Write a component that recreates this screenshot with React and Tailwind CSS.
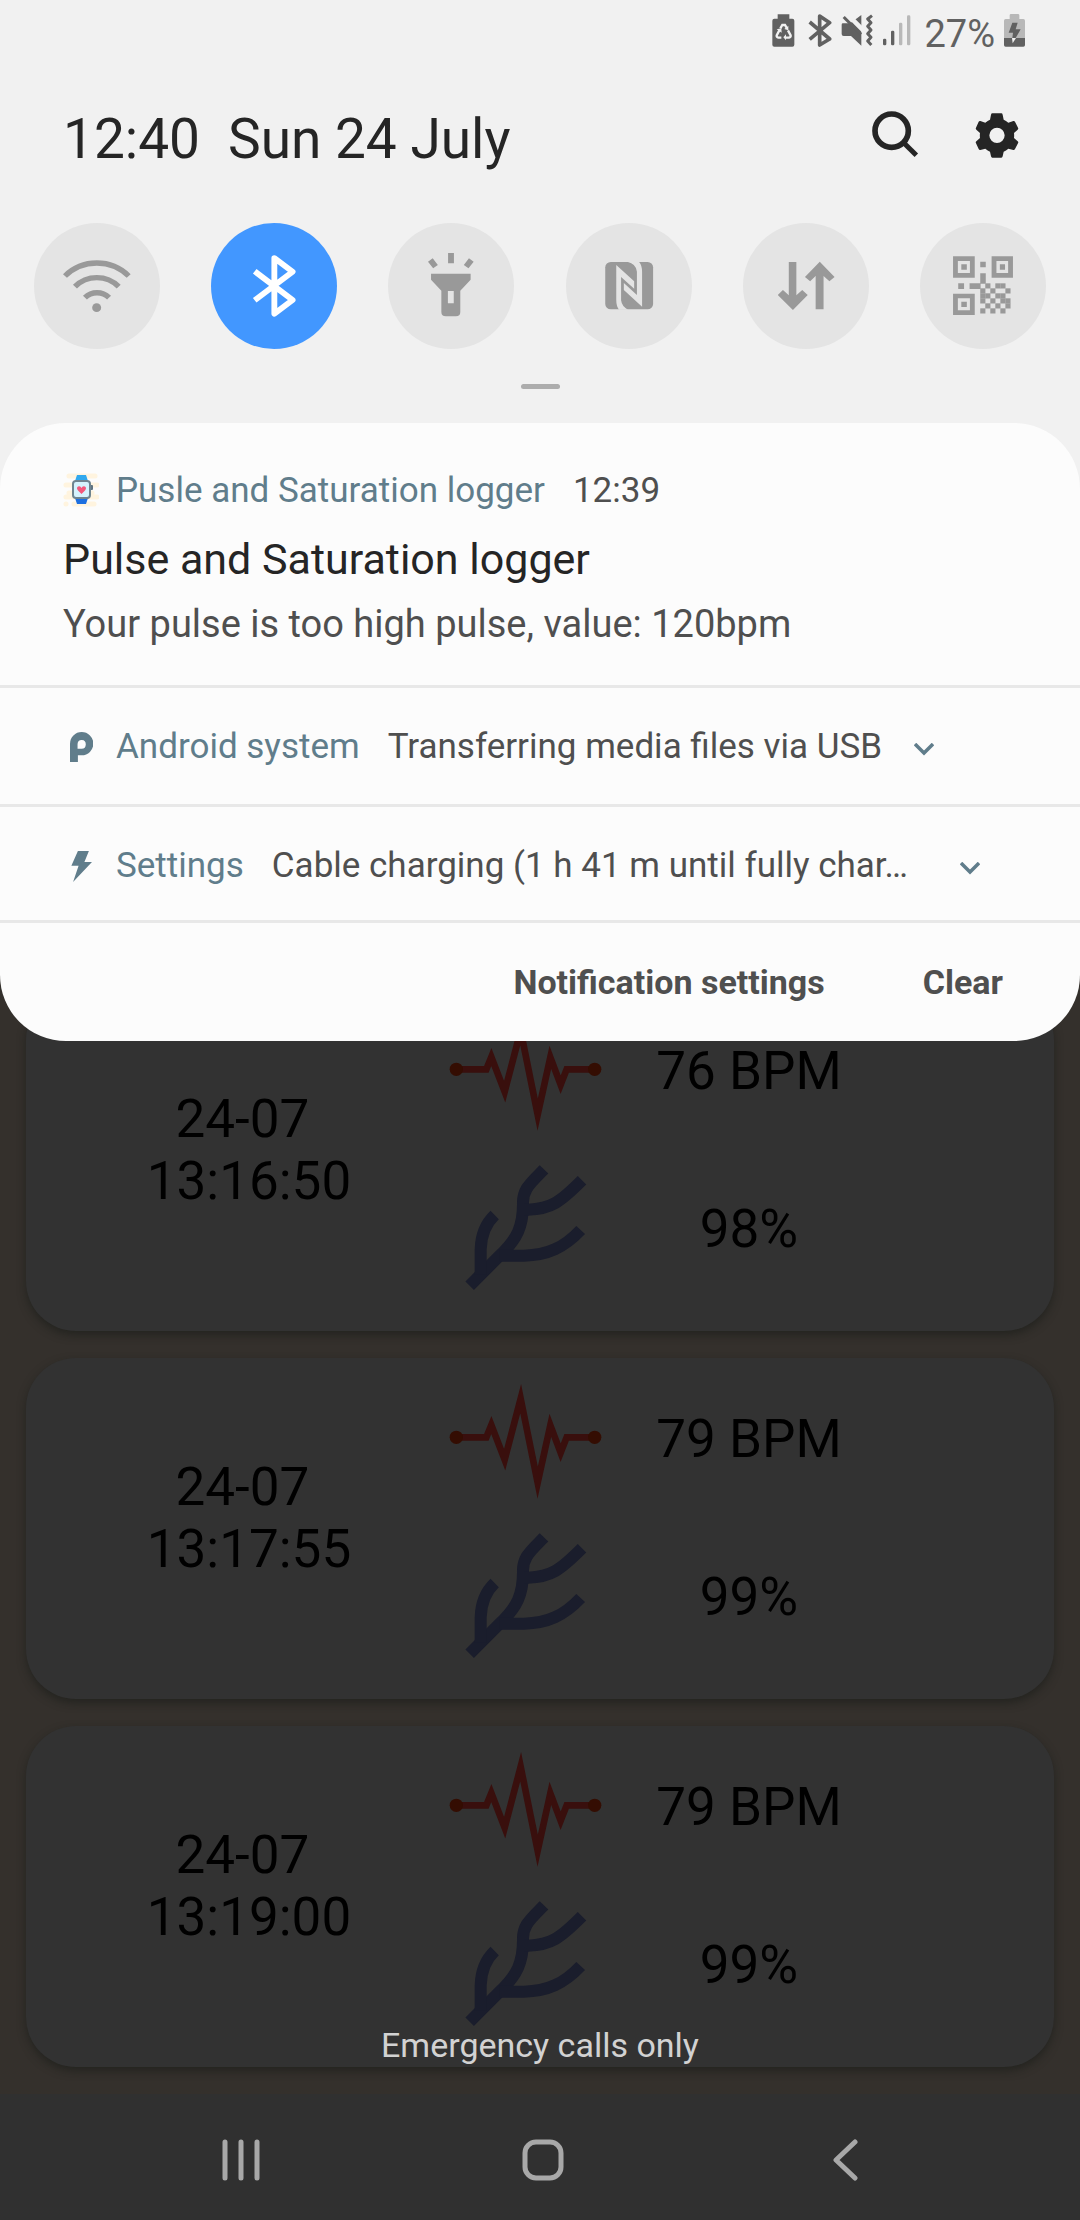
function StatusIcons() {
  return (
    <>
      <svg viewBox="63 45 69 99" className="block h-[33px] w-[23px]" aria-label="Battery saver">
        <path fill="#616161" d="M80 46H115V59H124Q130 59 130 65V137Q130 143 124 143H70Q64 143 64 137V65Q64 59 70 59H80Z" />
        <g fill="none" stroke="#f1f1f1" strokeWidth="7">
          <path d="M88 88L94 78H102L108 88" />
          <path d="M85 94L77 109Q76 115 82 116H91" />
          <path d="M111 94L119 109Q120 115 114 116H104" />
        </g>
        <path fill="#f1f1f1" d="M112 81V94L100 90ZM77 91L91 88L92 101ZM105 106V124L97 115Z" />
      </svg>
      <svg viewBox="173 45 72 99" className="ml-[13px] block h-[33px] w-[24px]" fill="none" stroke="#616161" strokeWidth="11" strokeLinejoin="round" aria-label="Bluetooth on">
        <path d="M178 69L238 120L208 138V51L238 71L178 121" />
      </svg>
      <svg viewBox="272 45 99 99" className="ml-[9px] block h-[33px] w-[33px]" aria-label="Vibrate">
        <path fill="#616161" d="M278 73H300L333 48V140L302 111H280Q274 111 274 105V77Q274 73 278 73Z" />
        <path fill="none" stroke="#f1f1f1" strokeWidth="14" d="M286 41L345 100" />
        <path fill="none" stroke="#616161" strokeWidth="9" d="M280 54L332 106" />
        <path fill="none" stroke="#616161" strokeWidth="9" strokeLinejoin="round" d="M365 50L352 60L362 71L352 82L362 93L352 104L362 115L352 126L363 138" />
      </svg>
      <svg viewBox="396 45 84 99" className="ml-[9px] block h-[33px] w-[28px]" aria-label="Signal">
        <g fill="#616161">
          <rect x="396" y="119" width="10" height="20" rx="4" />
          <rect x="420" y="95" width="10" height="44" rx="4" />
        </g>
        <g fill="#b8b8b8">
          <rect x="444" y="71" width="10" height="68" rx="4" />
          <rect x="468" y="49" width="10" height="90" rx="4" />
        </g>
      </svg>
      <span className="ml-[13px] text-[38px] leading-[44px] text-[#616161]">27%</span>
      <svg viewBox="762 45 63 99" className="ml-[9px] block h-[33px] w-[21px]" aria-label="Charging">
        <path fill="#b8b8b8" d="M779 49Q779 45 783 45H804Q808 45 808 49V60H820Q825 60 825 65V117H762V65Q762 60 767 60H779Z" />
        <path fill="#616161" d="M762 117H825V138Q825 143 820 143H767Q762 143 762 138Z" />
        <path fill="#616161" d="M787 71H803L797 91H812L797 117H787L789 101H776Z" />
        <path fill="#f1f1f1" d="M786 117H798L788 133Z" />
      </svg>
    </>
  );
}

function SearchIcon() {
  return (
    <svg viewBox="363 339 141 141" className="block size-[47px]" fill="none" stroke="#252525" aria-hidden="true">
      <circle cx="422" cy="398" r="50" strokeWidth="17" />
      <path strokeWidth="15" d="M458 434L496 472" />
    </svg>
  );
}

function GearIcon() {
  return (
    <svg viewBox="674 342 132 135" className="block h-[45px] w-[44px]" fill="#252525" fillRule="evenodd" aria-hidden="true">
      <path d="M726 343H753Q756 343 757 347L760 362Q767 365 774 371L789 366Q792 365 794 368L803 386Q805 389 802 392L791 402Q792 409 791 417L802 427Q805 430 803 433L794 450Q792 454 789 453L774 449Q767 455 760 458L757 472Q756 476 753 476H726Q723 476 722 472L719 458Q712 455 705 449L690 453Q687 454 685 450L677 433Q675 430 678 427L689 417Q688 409 689 402L678 392Q675 389 677 386L685 368Q687 365 690 366L705 371Q712 365 719 362L722 347Q723 343 726 343ZM740 386A23 23 0 1 0 740 432A23 23 0 1 0 740 386Z" />
    </svg>
  );
}

function WifiIcon() {
  return (
    <svg viewBox="99 428 366 378" preserveAspectRatio="none" className="block size-full" aria-hidden="true">
      <g fill="none" stroke="currentColor" strokeWidth="16">
        <path d="M189 587A129 129 0 0 1 374 587" />
        <path d="M218 619A88 88 0 0 1 345 619" />
        <path d="M247 652A49 49 0 0 1 317 652" />
      </g>
      <circle cx="281" cy="682" r="13" fill="currentColor" />
    </svg>
  );
}

function BluetoothIcon() {
  return (
    <svg viewBox="613 428 366 378" preserveAspectRatio="none" className="block size-full" fill="none" stroke="currentColor" strokeWidth="17" strokeLinejoin="round" aria-hidden="true">
      <path d="M740 573L850 659L797 700V533L850 574L740 660" />
    </svg>
  );
}

function TorchIcon() {
  return (
    <svg viewBox="1127 428 366 378" preserveAspectRatio="none" className="block size-full" aria-hidden="true">
      <path fill="none" stroke="currentColor" strokeWidth="17" d="M1310 518V549M1250 539L1265 559M1369 539L1354 559" />
      <path fill="currentColor" fillRule="evenodd" d="M1252 580H1367V598L1337 631V695Q1337 708 1324 708H1295Q1282 708 1282 695V631L1252 598ZM1301 632V669H1318V632Z" />
    </svg>
  );
}

function NfcIcon() {
  return (
    <svg viewBox="72 68 366 378" preserveAspectRatio="none" className="block size-full" aria-hidden="true">
      <rect x="186" y="185" width="139" height="142" rx="16" fill="currentColor" />
      <path fill="#e4e4e4" d="M218 194L270 243V265L232 230V300Q234 318 252 328H226Q218 318 218 300ZM293 319L240 269V248L278 284V214Q276 190 250 184H284Q293 195 293 214Z" />
    </svg>
  );
}

function DataIcon() {
  return (
    <svg viewBox="586 68 366 378" preserveAspectRatio="none" className="block size-full" fill="currentColor" aria-hidden="true">
      <path d="M719 185H741V285L758 269L774 284L731 329L687 284L702 269L719 285ZM809 184L852 230L837 243L820 227V327H797V227L781 243L766 230Z" />
    </svg>
  );
}

function QrIcon() {
  const rows = [".1.11.", "1.1..1", "11.11.", "1.1.11", ".1.1.1", "1.1.1."];
  return (
    <svg viewBox="1103 68 366 378" preserveAspectRatio="none" className="block size-full" fill="currentColor" aria-hidden="true">
      <path fillRule="evenodd" d="M1199 168H1262V232H1199ZM1213 182V218H1248V182ZM1311 168H1373V232H1311ZM1325 182V218H1359V182ZM1199 280H1262V344H1199ZM1213 294V330H1248V294Z" />
      <path d="M1223 192H1239V208H1223ZM1335 192H1350V208H1335ZM1223 304H1239V320H1223ZM1278 184H1294V201H1278ZM1214 249H1231V266H1214ZM1278 219H1294V250H1278ZM1247 249H1279V266H1247Z" />
      {rows.flatMap((row, r) =>
        [...row].map((cell, c) =>
          cell === "1" ? <rect key={`${r}-${c}`} x={1278 + c * 14.6} y={249 + r * 15} width="15" height="15.5" /> : null
        )
      )}
    </svg>
  );
}

function WatchIcon() {
  return (
    <svg viewBox="0 0 36 36" className="block size-[36px]" aria-hidden="true">
      <path stroke="#fff4df" strokeWidth="5" strokeLinecap="round" d="M6 3H32M3 12H34M6 20H29M3 24H34M11 31H31M3 31H3" />
      <path fill="#31a8ee" d="M14 2H23L25 8H12Z" />
      <path fill="#1d6fe0" d="M12 25H25L23 31H14Z" />
      <rect x="27" y="12" width="3" height="5" rx="1" fill="#5f7380" />
      <rect x="9" y="7" width="19" height="19" rx="4" fill="#6f8490" />
      <rect x="11" y="9" width="15" height="15" rx="2" fill="#d5f2fd" />
      <path fill="#f3587c" d="M18.5 21L15 17.5Q13 15 15 13.5Q17.5 12.5 18.5 15Q19.5 12.5 22 13.5Q24 15 22 17.5Z" />
    </svg>
  );
}

function AndroidIcon() {
  return (
    <svg viewBox="203 182 67 90" preserveAspectRatio="none" className="ml-[7px] block h-[30px] w-[23px]" fill="#607d8b" aria-hidden="true">
      <path fillRule="evenodd" d="M203 272V217A34 35 0 1 1 237 252H226V272ZM225 232V218A12 13 0 1 1 237 232Z" />
    </svg>
  );
}

function BoltIcon() {
  return (
    <svg viewBox="203 534 67 92" preserveAspectRatio="none" className="ml-[7px] block h-[31px] w-[23px]" fill="#607d8b" aria-hidden="true">
      <path d="M226 534H258L245 567H267L212 626L228 578H207Z" />
    </svg>
  );
}

function Chevron() {
  return (
    <svg viewBox="0 0 20 13" className="block h-[13px] w-[20px]" fill="none" stroke="#607d8b" strokeWidth="3.5" aria-hidden="true">
      <path d="M1 1L10 10L19 1" />
    </svg>
  );
}

function PulseIcon() {
  return (
    <svg viewBox="85 65 462 354" className="block h-[118px] w-[154px]" aria-label="Pulse">
      <path fill="none" stroke="#390f0d" strokeWidth="20" strokeMiterlimit="10" d="M107 231H197L212 194L252 298L300 115L351 367L389 195L420 277L438 231H522" />
      <circle cx="107" cy="231" r="20" fill="#340d02" />
      <circle cx="522" cy="231" r="20" fill="#340d02" />
    </svg>
  );
}

function VesselIcon() {
  return (
    <svg viewBox="130 519 369 378" className="block h-[126px] w-[123px]" fill="none" stroke="#1a1d2c" strokeWidth="36" aria-label="Saturation">
      <path d="M147 884L238 793C290 744 307 705 307 640C305 596 326 580 370 535" />
      <path d="M180 850V775Q182 710 222 672" />
      <path d="M310 656H322C392 654 420 632 484 568" />
      <path d="M236 794H310C380 793 430 770 480 717" />
    </svg>
  );
}

const toggles = [
  { label: "Wi-Fi", Icon: WifiIcon, on: false },
  { label: "Bluetooth", Icon: BluetoothIcon, on: true },
  { label: "Torch", Icon: TorchIcon, on: false },
  { label: "NFC", Icon: NfcIcon, on: false },
  { label: "Mobile data", Icon: DataIcon, on: false },
  { label: "QR scanner", Icon: QrIcon, on: false },
];

const readings = [
  { date: "24-07 ", time: "13:16:50", pulse: "76 BPM", saturation: "98%" },
  { date: "24-07 ", time: "13:17:55", pulse: "79 BPM", saturation: "99%" },
  { date: "24-07 ", time: "13:19:00", pulse: "79 BPM", saturation: "99%" },
];

function Reading({ date, time, pulse, saturation }) {
  return (
    <li className="flex rounded-[50px] bg-[#323232] pt-[24px] pb-[41px] text-[53px] leading-[62px] text-black shadow-[0_4px_8px_rgba(20,24,20,0.5)]">
      <p className="w-[446px] shrink-0 pt-[74px] text-center whitespace-pre">
        {date}
        {"\n"}
        {time}
      </p>
      <div className="grid w-[400px] shrink-0 grid-cols-[154px_1fr] items-start justify-items-center">
        <div className="-ml-[46px] h-[150px]">
          <PulseIcon />
        </div>
        <p className="pt-[26px] whitespace-nowrap">{pulse}</p>
        <div className="-ml-[48px]">
          <VesselIcon />
        </div>
        <p className="pt-[34px]">{saturation}</p>
      </div>
    </li>
  );
}

function SystemRow({ icon, app, text, wide }) {
  return (
    <li className="flex items-center border-t-[3px] border-[#e8e8e8] pt-[38px] pr-[100px] pb-[36px] pl-[63px] text-[35px] leading-[42px] last:pb-[33px]">
      <div className="w-[53px] shrink-0">{icon}</div>
      <span className="shrink-0 text-[#607d8b]">{app}</span>
      <span className={wide ? "ml-[28px] min-w-0 flex-1 truncate text-[#4f4f4f]" : "ml-[28px] truncate text-[#4f4f4f]"}>{text}</span>
      <button type="button" aria-label={`Expand ${app}`} className="ml-[32px] shrink-0 pt-1">
        <Chevron />
      </button>
    </li>
  );
}

export default function App() {
  return (
    <div className="relative flex min-h-screen flex-col bg-[#34302c] font-['Roboto',sans-serif]">
      <main className="relative px-[26px] pt-[990px] pb-[27px]">
        <ul className="flex flex-col gap-[27px]">
          {readings.map((r) => (
            <Reading key={r.time} {...r} />
          ))}
        </ul>
        <p className="absolute inset-x-0 bottom-[28px] text-center text-[34px] leading-[42px] text-[#d2d2d2]">Emergency calls only</p>
      </main>

      <nav className="mt-auto flex h-[126px] items-center justify-around bg-[#303030] pt-[6px] pr-[84px] pl-[90px]">
        <button type="button" aria-label="Recent apps" className="p-2">
          <svg viewBox="0 0 42 42" className="block size-[42px]" stroke="#a8a8a8" strokeWidth="5" strokeLinecap="round">
            <path d="M5 3V39M21 3V39M37 3V39" />
          </svg>
        </button>
        <button type="button" aria-label="Home" className="p-2">
          <svg viewBox="0 0 42 42" className="block size-[42px]" fill="none" stroke="#a8a8a8" strokeWidth="5">
            <rect x="3" y="3" width="36" height="36" rx="11" />
          </svg>
        </button>
        <button type="button" aria-label="Back" className="p-2">
          <svg viewBox="0 0 42 42" className="block size-[42px]" fill="none" stroke="#a8a8a8" strokeWidth="5" strokeLinecap="round" strokeLinejoin="round">
            <path d="M31 3L12 21L31 39" />
          </svg>
        </button>
      </nav>

      <section className="absolute inset-x-0 top-0" aria-label="Notification shade">
        <header className="bg-[#f1f1f1] pb-[134px]">
          <div className="flex items-baseline justify-end pt-3 pr-[55px]">
            <StatusIcons />
          </div>
          <div className="flex items-baseline pt-[51px] pr-[61px] pl-[63px] text-[55px] leading-[64px] text-[#252525]">
            <time>12:40</time>
            <span className="ml-[28px]">Sun 24 July</span>
            <button type="button" aria-label="Search" className="ml-auto">
              <SearchIcon />
            </button>
            <button type="button" aria-label="Settings" className="ml-[56px]">
              <GearIcon />
            </button>
          </div>
          <div className="flex justify-between px-[34px] pt-[52px]">
            {toggles.map(({ label, Icon, on }) => (
              <button
                key={label}
                type="button"
                aria-label={label}
                aria-pressed={on}
                className={on ? "size-[126px] rounded-full bg-[#4297ff] text-white" : "size-[126px] rounded-full bg-[#e4e4e4] text-[#999999]"}
              >
                <Icon />
              </button>
            ))}
          </div>
          <div className="mx-auto mt-[35px] h-[5px] w-[39px] rounded-full bg-[#adadad]" />
        </header>

        <div className="-mt-[100px] rounded-[66px] bg-[#fcfcfc]">
          <article className="px-[63px] pt-[47px] pb-[39px]">
            <div className="flex items-center text-[35px] leading-[42px]">
              <div className="w-[53px]">
                <WatchIcon />
              </div>
              <span className="text-[#607d8b]">Pusle and Saturation logger</span>
              <time className="ml-[28px] text-[#4f4f4f]">12:39</time>
            </div>
            <h1 className="mt-5 text-[43px] leading-[54px] text-[#252525]">Pulse and Saturation logger</h1>
            <p className="mt-4 text-[38px] leading-[44px] text-[#4f4f4f]">Your pulse is too high pulse, value: 120bpm</p>
          </article>
          <ul>
            <SystemRow icon={<AndroidIcon />} app="Android system" text="Transferring media files via USB" />
            <SystemRow icon={<BoltIcon />} app="Settings" text="Cable charging (1 h 41 m until fully char…" wide />
          </ul>
          <footer className="flex h-[121px] items-center justify-end gap-[98px] border-t-[3px] border-[#e8e8e8] pr-[77px] text-[34px] leading-[42px] font-bold text-[#4f4f4f]">
            <button type="button">Notification settings</button>
            <button type="button">Clear</button>
          </footer>
        </div>
      </section>
    </div>
  );
}
